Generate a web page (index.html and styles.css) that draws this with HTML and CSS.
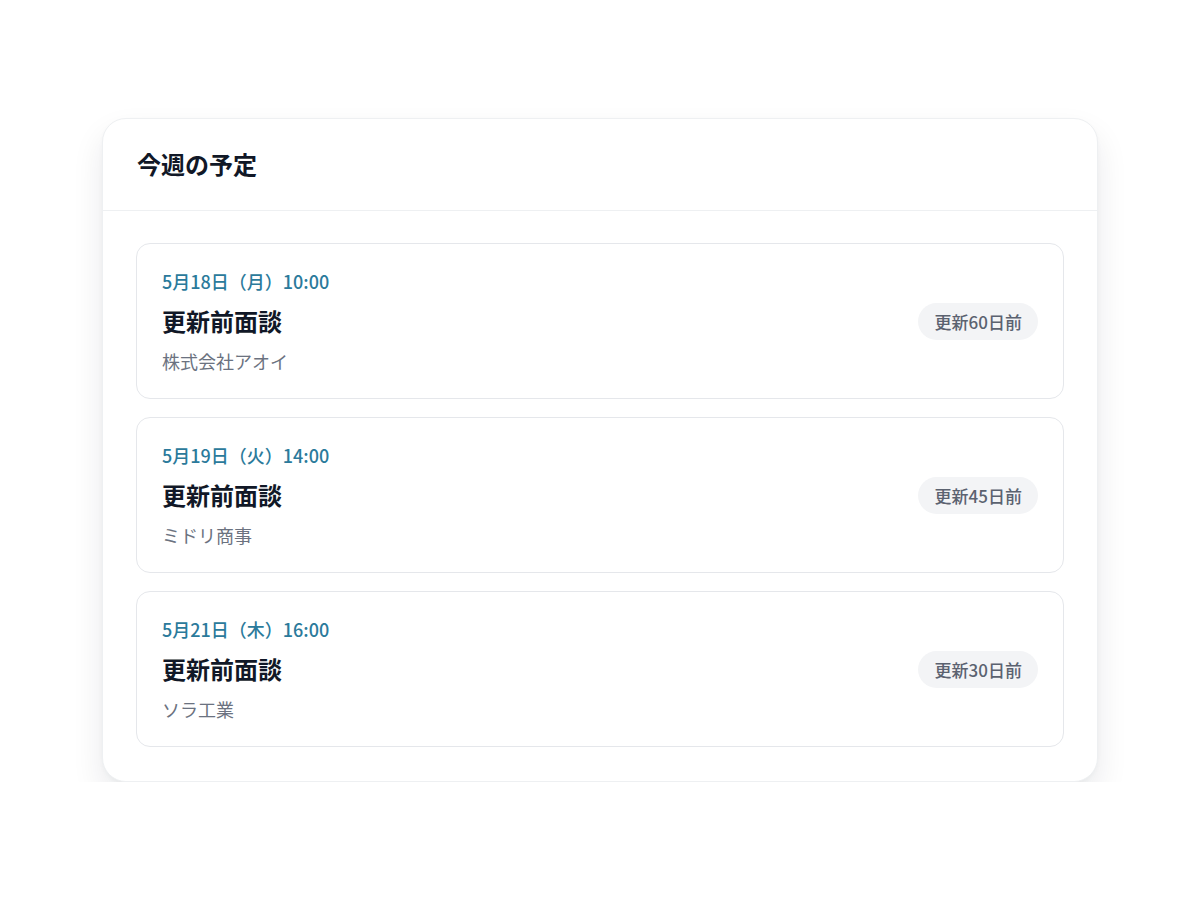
FILE: index.html
```html
<!DOCTYPE html>
<html lang="ja">
<head>
<meta charset="utf-8">
<title>今週の予定</title>
<link rel="stylesheet" href="styles.css">
</head>
<body>
<section class="card">
  <header class="card-header">
    <h2 class="card-title">今週の予定</h2>
  </header>
  <div class="card-body">
    <article class="event">
      <div class="event-info">
        <div class="event-date">5月18日（月）10:00</div>
        <div class="event-title">更新前面談</div>
        <div class="event-company">株式会社アオイ</div>
      </div>
      <span class="badge">更新60日前</span>
    </article>
    <article class="event">
      <div class="event-info">
        <div class="event-date">5月19日（火）14:00</div>
        <div class="event-title">更新前面談</div>
        <div class="event-company">ミドリ商事</div>
      </div>
      <span class="badge">更新45日前</span>
    </article>
    <article class="event">
      <div class="event-info">
        <div class="event-date">5月21日（木）16:00</div>
        <div class="event-title">更新前面談</div>
        <div class="event-company">ソラ工業</div>
      </div>
      <span class="badge">更新30日前</span>
    </article>
  </div>
</section>
</body>
</html>
```
FILE: styles.css
```css
* { box-sizing: border-box; }
html, body { margin: 0; padding: 0; background: #ffffff; }
body {
  font-family: "Noto Sans CJK JP", "Noto Sans", sans-serif;
  color: #111827;
  padding-top: 118px;
}
.card {
  width: 996px;
  margin: 0 auto;
  background: #ffffff;
  border: 1px solid #eef0f2;
  border-radius: 24px;
  box-shadow: 0 16px 32px rgba(15, 23, 42, 0.09), 0 2px 4px rgba(15, 23, 42, 0.03);
}
.card-header {
  padding: 29px 34px 30px;
  border-bottom: 1px solid #eef0f2;
}
.card-title {
  margin: 0;
  font-size: 24px;
  line-height: 32px;
  font-weight: 700;
  color: #111827;
}
.card-body {
  padding: 32px 33px 34px;
  display: flex;
  flex-direction: column;
  gap: 18px;
}
.event {
  display: flex;
  align-items: center;
  justify-content: space-between;
  border: 1px solid #e5e7eb;
  border-radius: 14px;
  padding: 24px 25px 24px;
}
.event-info {
  display: flex;
  flex-direction: column;
}
.event-date {
  font-size: 18px;
  line-height: 26px;
  font-weight: 500;
  color: #2b7a9b;
}
.event-title {
  margin-top: 11px;
  font-size: 24px;
  line-height: 32px;
  font-weight: 700;
  color: #111827;
}
.event-company {
  margin-top: 11px;
  font-size: 18px;
  line-height: 26px;
  font-weight: 400;
  color: #6b7280;
}
.badge {
  display: inline-flex;
  align-items: center;
  height: 37px;
  padding: 0 16px 0 17px;
  border-radius: 999px;
  background: #f3f4f6;
  color: #5b6270;
  font-size: 17px;
  font-weight: 500;
}
```
